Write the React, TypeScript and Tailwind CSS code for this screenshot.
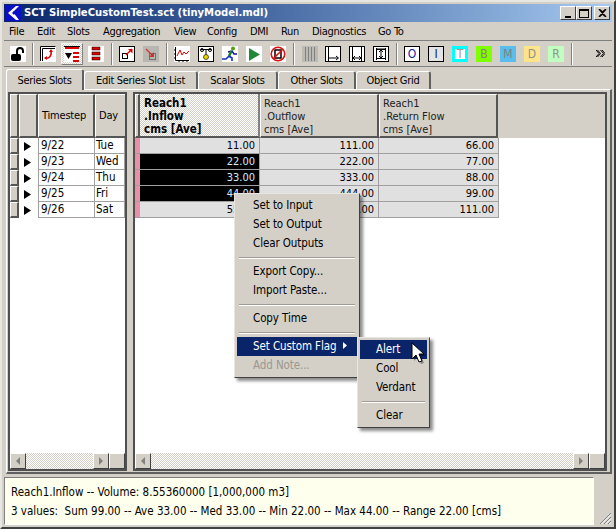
import type { ReactNode } from 'react';

// Toolbar tile: 16px picture centered in a 24px slot.
function Tool({ children, active }: { children: ReactNode; active?: boolean }) {
  return (
    <div className="flex h-[24px] w-[24px] shrink-0 items-center justify-center">
      {active ? (
        <div className="flex h-[22px] w-[22px] items-center justify-center border border-[#f4f3ef] border-r-[#808080] border-b-[#808080] bg-[repeating-conic-gradient(#d4d0c8_0_25%,#ffffff_0_50%)] bg-[length:2px_2px]">
          {children}
        </div>
      ) : (
        children
      )}
    </div>
  );
}

function Sep({ w }: { w: string }) {
  return (
    <div className={`flex h-[22px] shrink-0 justify-center ${w}`}>
      <div className="h-full w-[2px] border-l border-r border-l-[#808080] border-r-white" />
    </div>
  );
}

function Ico({ children, bg = '#ffffff' }: { children: ReactNode; bg?: string }) {
  return (
    <svg width="16" height="16" viewBox="0 0 16 16" style={{ background: bg }}>
      {children}
    </svg>
  );
}

function Letter({ ch, cls }: { ch: string; cls: string }) {
  return <div className={`flex h-[16px] w-[16px] items-center justify-center text-[12px] leading-none ${cls}`}>{ch}</div>;
}

function Box() {
  return <rect x="0.5" y="0.5" width="15" height="15" fill="none" stroke="#000" />;
}

const menuNames = [
  { name: 'File', w: 'w-[28px]' },
  { name: 'Edit', w: 'w-[30px]' },
  { name: 'Slots', w: 'w-[36px]' },
  { name: 'Aggregation', w: 'w-[71px]' },
  { name: 'View', w: 'w-[33px]' },
  { name: 'Config', w: 'w-[43px]' },
  { name: 'DMI', w: 'w-[31px]' },
  { name: 'Run', w: 'w-[31px]' },
  { name: 'Diagnostics', w: 'w-[66px]' },
  { name: 'Go To', w: 'w-[40px]' },
];
const tabs = [
  { name: 'Series Slots', w: 'w-[78px]' },
  { name: 'Edit Series Slot List', w: 'w-[114px]' },
  { name: 'Scalar Slots', w: 'w-[80px]' },
  { name: 'Other Slots', w: 'w-[78px]' },
  { name: 'Object Grid', w: 'w-[75px]' },
];
const rows = [
  { date: '9/22', day: 'Tue', a: '11.00', b: '111.00', c: '66.00', sel: false },
  { date: '9/23', day: 'Wed', a: '22.00', b: '222.00', c: '77.00', sel: true },
  { date: '9/24', day: 'Thu', a: '33.00', b: '333.00', c: '88.00', sel: true },
  { date: '9/25', day: 'Fri', a: '44.00', b: '444.00', c: '99.00', sel: true },
  { date: '9/26', day: 'Sat', a: '55.00', b: '555.00', c: '111.00', sel: false },
];

const headCell = 'h-full shrink-0 border-t border-l border-t-white border-l-white border-r-2 border-b-2 border-r-[#555] border-b-[#555] bg-[#d4d0c8]';

function ScrollBar() {
  return (
    <div className="flex h-[16px] shrink-0 bg-[repeating-conic-gradient(#d4d0c8_0_25%,#ffffff_0_50%)] bg-[length:2px_2px]">
      <SbBtn dir="l" />
      <div className="flex-1" />
      <SbBtn dir="r" />
      <div className="h-[16px] w-[16px] border border-t-white border-l-white border-r-[#404040] border-b-[#404040] bg-[#d4d0c8]" />
    </div>
  );
}

function SbBtn({ dir }: { dir: 'l' | 'r' }) {
  return (
    <div className="flex h-[16px] w-[16px] items-center justify-center border border-t-white border-l-white border-r-[#404040] border-b-[#404040] bg-[#d4d0c8]">
      <svg width="5" height="8" viewBox="0 0 5 8">
        <path d={dir === 'l' ? 'M4 0v8L0 4z' : 'M0 0v8l4-4z'} fill="#808080" />
      </svg>
    </div>
  );
}

function MenuItem({ label, hi, off, arrow }: { label: string; hi?: boolean; off?: boolean; arrow?: boolean }) {
  return (
    <div
      className={`relative flex h-[19px] items-center pl-[16px] text-[11.5px] tracking-[-0.1px] ${hi ? 'bg-[#0a246a] text-white' : off ? 'text-[#9a9890]' : 'text-black'}`}
    >
      {label}
      {arrow && (
        <svg width="4" height="7" viewBox="0 0 4 7" className="absolute right-[10px] top-[5px]">
          <path d="M0 0v7l4-3.500z" fill="#fff" />
        </svg>
      )}
    </div>
  );
}

function MenuSep() {
  return <div className="mx-[2px] mb-[3px] mt-[4px] h-[2px] border-t border-b border-t-[#a09c94] border-b-white" />;
}

export default function App() {
  return (
    <div className="relative flex h-[529px] w-[616px] flex-col overflow-hidden border-2 border-t-[#e8e6e0] border-l-[#e8e6e0] border-r-[#404040] border-b-[#404040] bg-[#d4d0c8] p-[2px] font-['DejaVu_Sans_Condensed','Roboto',sans-serif] text-[11px] text-black">
      {/* title bar */}
      <div className="flex h-[18px] shrink-0 items-center bg-gradient-to-r from-[#0a246a] to-[#a6caf0] pl-[1px] pr-[2px]">
        <svg width="16" height="16" viewBox="0 0 16 16" className="shrink-0">
          <rect width="16" height="16" fill="#0a10c8" />
          <path d="M3 8 11 1h3L8 7l6 8h-3z" fill="#fff" />
          <path d="M7 8l2-2 1 2-1 2z" fill="#0a10c8" />
        </svg>
        <span className="ml-[3px] text-[11.2px] font-bold text-white">SCT SimpleCustomTest.sct (tinyModel.mdl)</span>
        <div className="ml-auto flex gap-[2px]">
          <div className="flex">
            <TitleBtn>
              <div className="mt-[7px] h-[2px] w-[6px] bg-black" />
            </TitleBtn>
            <TitleBtn>
              <div className="h-[9px] w-[10px] border border-t-2 border-black" />
            </TitleBtn>
          </div>
          <TitleBtn>
            <svg width="9" height="8" viewBox="0 0 9 8">
              <path d="M1 0l3.500 3L8 0M1 8l3.500-3L8 8M1 0l7 8M8 0 1 8" stroke="#000" strokeWidth="1.400" fill="none" />
            </svg>
          </TitleBtn>
        </div>
      </div>

      {/* menu bar */}
      <div className="flex h-[18px] shrink-0 items-center pl-[5px] pt-[3px] tracking-[-0.3px]">
        {menuNames.map((m) => (
          <span key={m.name} className={`shrink-0 ${m.w}`}>
            {m.name}
          </span>
        ))}
      </div>

      {/* toolbar */}
      <div className="flex h-[27px] shrink-0 items-center border-t border-b border-t-[#808080] border-b-[#808080] pl-[2px]">
        <Tool>
          <Ico>
            <rect x="1" y="8" width="10" height="7" rx="2" fill="#000" />
            <path d="M7 8V5a3 3 0 0 1 6 0v2" fill="none" stroke="#000" strokeWidth="2" />
          </Ico>
        </Tool>
        <Sep w="w-[6px]" />
        <Tool>
          <Ico>
            <path d="M.5 15V.5H15.500M2.500 15V2.500H15" fill="none" stroke="#000" />
            <path d="M5 12c4 1 7-2 6-7" fill="none" stroke="#d00" strokeWidth="1.500" />
            <path d="M11 3l-2 3h4zM4 12l3-2v4z" fill="#d00" />
          </Ico>
        </Tool>
        <Tool active>
          <Ico>
            <rect x="1" y="1" width="14" height="2" fill="#d00" />
            <rect x="0" y="0" width="16" height="1" fill="#000" />
            <path d="M1 7h7l-3.500 6z" fill="#000" />
            <rect x="9" y="6" width="6" height="2" fill="#d00" />
            <rect x="9" y="10" width="6" height="2" fill="#d00" />
            <rect x="9" y="14" width="6" height="2" fill="#d00" />
          </Ico>
        </Tool>
        <Tool>
          <Ico>
            <rect x="4" y="1" width="8" height="3" fill="#d00" stroke="#000" strokeWidth="0.500" />
            <rect x="4" y="6" width="8" height="3" fill="#d00" stroke="#000" strokeWidth="0.500" />
            <rect x="4" y="11" width="8" height="3" fill="#d00" stroke="#000" strokeWidth="0.500" />
          </Ico>
        </Tool>
        <Sep w="w-[7px]" />
        <Tool>
          <Ico>
            <Box />
            <rect x="3.500" y="7.500" width="5" height="5" fill="none" stroke="#000" />
            <path d="M7 9l6-6" stroke="#d00" strokeWidth="1.200" />
            <path d="M9 3h4.500v4.500z" fill="#d00" />
          </Ico>
        </Tool>
        <Tool>
          <Ico bg="#b8b6b0">
            <rect x="6.500" y="7.500" width="6" height="6" fill="none" stroke="#707070" />
            <path d="M3 3l7 7" stroke="#d03030" strokeWidth="1.200" />
            <path d="M11 6v5H6z" fill="#d03030" />
          </Ico>
        </Tool>
        <Sep w="w-[7px]" />
        <Tool>
          <Ico>
            <path d="M1.500 1v13.500H15M0 4h2M0 8h2M0 12h2M5 14v2M9 14v2M13 14v2" fill="none" stroke="#000" />
            <path d="M3 10l3-6 2 5 2-3 2 2 3-3" fill="none" stroke="#d00" />
          </Ico>
        </Tool>
        <Tool>
          <Ico>
            <Box />
            <path d="M3 3.500h10M8 3.500V9" stroke="#000" fill="none" />
            <circle cx="4" cy="4" r="1.500" fill="none" stroke="#000" />
            <circle cx="12" cy="4" r="1.500" fill="none" stroke="#000" />
            <circle cx="8" cy="11" r="2.500" fill="#e8d800" stroke="#000" strokeWidth="0.600" />
          </Ico>
        </Tool>
        <Tool>
          <Ico>
            <circle cx="11" cy="2.500" r="2" fill="#50a010" />
            <path d="M6 6l4-1 2 3 3 0" fill="none" stroke="#1010a0" strokeWidth="1.500" />
            <path d="M9.500 5 7 10" stroke="#208020" strokeWidth="2.500" />
            <path d="M7 10l3 2 0 3M7 10l-3 3H0" fill="none" stroke="#1030c0" strokeWidth="1.600" />
          </Ico>
        </Tool>
        <Tool>
          <Ico>
            <path d="M3 2l11 6.500L3 15z" fill="#208838" />
          </Ico>
        </Tool>
        <Tool>
          <Ico>
            <rect x="5" y="4" width="6" height="8" fill="none" stroke="#000" strokeWidth="1.500" />
            <circle cx="8" cy="8" r="6.800" fill="none" stroke="#e01010" strokeWidth="1.600" />
            <path d="M3 13 13 3" stroke="#e01010" strokeWidth="1.600" />
          </Ico>
        </Tool>
        <Sep w="w-[8px]" />
        <Tool>
          <Ico bg="#bcbab4">
            <path d="M3.500 1v14M6.500 1v14M9.500 1v14M12.500 1v14" stroke="#808080" />
          </Ico>
        </Tool>
        <div className="-ml-[1px]">
          <Tool>
            <Ico>
              <Box />
              <path d="M3.500 1v14M3 12h10M11 10l2.500 2L11 14" fill="none" stroke="#000" />
            </Ico>
          </Tool>
        </div>
        <Tool>
          <Ico>
            <Box />
            <path d="M3.500 1v14M12.500 1v14M4 12h8M6 10l-2 2 2 2M10 10l2 2-2 2" fill="none" stroke="#000" />
          </Ico>
        </Tool>
        <Tool>
          <Ico>
            <Box />
            <path d="M3 3.500h10M3 12.500h10M8 4v8M4 3h8M6 6 8 4l2 2M6 10l2 2 2-2M3.500 2v12M12.500 2v12" fill="none" stroke="#000" />
          </Ico>
        </Tool>
        <Sep w="w-[7px]" />
        <Tool>
          <Letter ch="O" cls="border border-black bg-white text-[#1020a0]" />
        </Tool>
        <Tool>
          <Letter ch="I" cls="border border-black bg-[#e4e4e4] text-[#102060]" />
        </Tool>
        <Tool>
          <Letter ch="T" cls="border-[3px] border-[#00ffff] bg-white text-[#9a9a9a] text-[11px]" />
        </Tool>
        <Tool>
          <Letter ch="B" cls="bg-[#80ff00] text-[#808080]" />
        </Tool>
        <Tool>
          <Letter ch="M" cls="bg-[#5bbcee] text-[#808080]" />
        </Tool>
        <Tool>
          <Letter ch="D" cls="bg-[#ffe48a] text-[#909090]" />
        </Tool>
        <Tool>
          <Letter ch="R" cls="bg-[#c0ffc0] text-[#909090]" />
        </Tool>
        <Sep w="w-[8px]" />
        <svg width="9" height="7" viewBox="0 0 9 7" className="ml-[20px]">
          <path d="M0 0l3 3.500L0 7M1.500 0l3 3.500-3 3.500M4.500 0l3 3.500-3 3.500M6 0l3 3.500L6 7" fill="none" stroke="#000" />
        </svg>
      </div>

      {/* tabs */}
      <div className="flex h-[22px] shrink-0 items-end pl-[2px] tracking-[-0.3px]">
        {tabs.map((t, i) => (
          <div
            key={t.name}
            className={`flex shrink-0 items-center justify-center rounded-t-[3px] border-t border-l border-r-2 border-t-white border-l-white border-r-[#606060] pt-[2px] ${t.w} ${i === 0 ? 'relative z-10 -mb-[1px] h-[21px] bg-[#d4d0c8]' : 'h-[18px]'}`}
          >
            {t.name}
          </div>
        ))}
      </div>

      {/* tab pane */}
      <div className="ml-[2px] mr-0 flex h-[385px] shrink-0 gap-[6px] border-t border-l border-r-2 border-b-2 border-t-white border-l-white border-r-[#606060] border-b-[#606060] px-[1px] pb-[1px] pt-[2px]">
        {/* left table */}
        <div className="flex h-[379px] w-[119px] shrink-0 flex-col border-2 border-[#505050] bg-white">
          <div className="flex h-[44px] shrink-0 tracking-[-0.2px]">
            <div className={`${headCell} w-[9px]`} />
            <div className={`${headCell} w-[19px]`} />
            <div className={`${headCell} flex w-[57px] items-center pl-[3px] pt-[1px]`}>Timestep</div>
            <div className="flex h-full flex-1 items-center border-t border-l border-b-2 border-t-white border-l-white border-b-[#555] bg-[#d4d0c8] pl-[3px] pt-[1px]">Day</div>
          </div>
          {rows.map((r) => (
            <div key={r.date} className="flex h-[16px] shrink-0 text-[11.5px] leading-none">
              <div className="h-full w-[9px] border-t border-l border-r-2 border-b-2 border-t-white border-l-white border-r-[#555] border-b-[#555] bg-[#d4d0c8]" />
              <div className="flex h-full w-[19px] items-center pl-[5px]">
                <svg width="7" height="9" viewBox="0 0 7 9">
                  <path d="M0 0v9l7-4.500z" fill="#000" />
                </svg>
              </div>
              <div className="flex h-full w-[57px] items-center border-b border-l border-r border-[#a0a0a0] pl-[2px]">{r.date}</div>
              <div className="flex h-full flex-1 items-center border-b border-r border-[#a0a0a0] pl-[1px]">{r.day}</div>
            </div>
          ))}
          <div className="flex-1" />
          <ScrollBar />
        </div>

        {/* right table */}
        <div className="flex h-[379px] w-[474px] shrink-0 flex-col border-2 border-[#505050] bg-white">
          <div className="flex h-[44px] shrink-0">
            <div className={`${headCell} w-[5px]`} />
            <div className="h-full w-[120px] shrink-0 border-r-2 border-b-2 border-r-[#808080] border-b-[#555] bg-[repeating-conic-gradient(#d4d0c8_0_25%,#ffffff_0_50%)] bg-[length:2px_2px] pl-[4px] pt-[3px] text-[11.5px] font-bold leading-[13px]">
              Reach1
              <br />
              .Inflow
              <br />
              cms [Ave]
            </div>
            <SlotHead name=".Outflow" />
            <SlotHead name=".Return Flow" />
            <div className="h-full flex-1 bg-[#d4d0c8]" />
          </div>
          {rows.map((r) => (
            <div key={r.date} className="flex h-[16px] shrink-0 leading-none">
              <div className="h-full w-[5px] border-b border-[#a0a0a0] bg-[#e890a8]" />
              <div
                className={`flex h-full w-[120px] items-center justify-end border-b border-r border-[#a0a0a0] pr-[4px] ${r.sel ? 'bg-black text-[#d8e8f8]' : 'bg-[#e0e0e0]'}`}
              >
                {r.a}
              </div>
              <div className="flex h-full w-[119px] items-center justify-end border-b border-r border-[#a0a0a0] bg-[#e0e0e0] pr-[4px]">{r.b}</div>
              <div className="flex h-full w-[120px] items-center justify-end border-b border-r border-[#a0a0a0] bg-[#e0e0e0] pr-[4px]">{r.c}</div>
            </div>
          ))}
          <div className="flex-1" />
          <ScrollBar />
        </div>
      </div>

      {/* status */}
      <div className="mt-[3px] flex shrink-0">
        <div className="flex h-[48px] w-[590px] shrink-0 flex-col justify-center gap-[3px] border border-t-[#808080] border-l-[#808080] border-r-white border-b-white bg-[#ffffee] pl-[6px] text-[11.5px] leading-[16px]">
          <div>Reach1.Inflow -- Volume: 8.55360000 [1,000,000 m3]</div>
          <div className="whitespace-pre">3 values:  Sum 99.00 -- Ave 33.00 -- Med 33.00 -- Min 22.00 -- Max 44.00 -- Range 22.00 [cms]</div>
        </div>
        <div className="flex flex-1 items-end justify-end">
          <svg width="13" height="13" viewBox="0 0 13 13">
            <path d="M12 1 1 12M12 5 5 12M12 9 9 12" stroke="#808080" />
            <path d="M12 2.500 2.500 12M12 6.500 6.500 12M12 10.500 10.500 12" stroke="#fff" />
          </svg>
        </div>
      </div>

      {/* context menu */}
      <div className="absolute left-[232px] top-[191px] w-[126px] border border-t-[#e8e6e0] border-l-[#e8e6e0] border-r-[#404040] border-b-[#404040] bg-[#d4d0c8] p-[2px] shadow-[3px_3px_3px_rgba(0,0,0,0.45)]">
        <MenuItem label="Set to Input" />
        <MenuItem label="Set to Output" />
        <MenuItem label="Clear Outputs" />
        <MenuSep />
        <MenuItem label="Export Copy..." />
        <MenuItem label="Import Paste..." />
        <MenuSep />
        <MenuItem label="Copy Time" />
        <MenuSep />
        <MenuItem label="Set Custom Flag" hi arrow />
        <MenuItem label="Add Note..." off />
      </div>

      {/* submenu */}
      <div className="absolute left-[355px] top-[335px] w-[73px] border border-t-[#e8e6e0] border-l-[#e8e6e0] border-r-[#404040] border-b-[#404040] bg-[#d4d0c8] p-[2px] shadow-[3px_3px_3px_rgba(0,0,0,0.45)]">
        <MenuItem label="Alert" hi />
        <MenuItem label="Cool" />
        <MenuItem label="Verdant" />
        <MenuSep />
        <MenuItem label="Clear" />
      </div>

      {/* mouse pointer */}
      <svg width="16" height="24" viewBox="0 0 16 24" className="absolute left-[409px] top-[340px]">
        <path d="M3 3v16l4-4 3 7 3-1-3-7h5z" fill="#000" opacity="0.35" />
        <path d="M1 1v16l4-4 3 7 3-1-3-7h5z" fill="#fff" stroke="#000" />
      </svg>
    </div>
  );
}

function SlotHead({ name }: { name: string }) {
  return (
    <div className="h-full w-[119px] shrink-0 border-t border-l border-r-2 border-b-2 border-t-white border-l-white border-r-[#555] border-b-[#555] bg-[#d4d0c8] pl-[3px] pt-[2px] leading-[13px] text-[#202020]">
      Reach1
      <br />
      {name}
      <br />
      cms [Ave]
    </div>
  );
}

function TitleBtn({ children }: { children: ReactNode }) {
  return (
    <div className="flex h-[14px] w-[16px] items-center justify-center border border-t-white border-l-white border-r-[#404040] border-b-[#404040] bg-[#d4d0c8]">
      {children}
    </div>
  );
}
